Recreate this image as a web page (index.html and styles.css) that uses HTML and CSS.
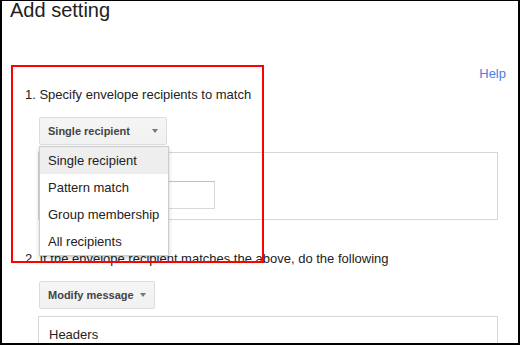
FILE: index.html
```html
<!DOCTYPE html>
<html lang="en">
<head>
    <meta charset="UTF-8">
    <title>Add setting</title>
    <link rel="stylesheet" href="styles.css">
</head>
<body>

    <div class="page">
        <h1 class="title">Add setting</h1>

        <div class="help-row">
            <a href="#" class="help-link">Help</a>
        </div>

        <div class="step">
            <div class="step-label">1. Specify envelope recipients to match</div>
            <div class="step-body">
                <div class="select">
                    <div class="btn btn-wide">
                        <span>Single recipient</span>
                        <span class="arrow"></span>
                    </div>
                    <ul class="menu">
                        <li class="menu-item active">Single recipient</li>
                        <li class="menu-item">Pattern match</li>
                        <li class="menu-item">Group membership</li>
                        <li class="menu-item">All recipients</li>
                    </ul>
                </div>
                <div class="panel panel-match">
                    <div class="text-input"></div>
                </div>
            </div>
        </div>

        <div class="step step-second">
            <div class="step-label">2. If the envelope recipient matches the above, do the following</div>
            <div class="step-body">
                <div class="btn">
                    <span>Modify message</span>
                    <span class="arrow"></span>
                </div>
                <div class="panel panel-headers">Headers</div>
            </div>
        </div>

        <div class="highlight"></div>
    </div>

</body>
</html>
```

FILE: styles.css
```css
body {
    margin: 0;
    padding: 0;
    font-family: "Liberation Sans", Arial, sans-serif;
    font-size: 13px;
    color: #222;
    background: #fff;
}

.page {
    position: relative;
    height: 345px;
    box-sizing: border-box;
    border: 2px solid #000;
    border-top-width: 1px;
    overflow: hidden;
    background: #fff;
}

.title {
    margin: 0;
    padding-left: 8px;
    font-size: 20px;
    font-weight: normal;
    line-height: 18px;
    color: #222;
}

.help-row {
    margin-top: 47px;
    padding-right: 12px;
    text-align: right;
    line-height: 16px;
}

.help-link {
    color: #4a7de2;
    text-decoration: none;
}

.step {
    margin-top: 5px;
    padding: 0 20px 0 23px;
    line-height: 16px;
}

.step-second {
    margin-top: 31px;
}

.step-body {
    padding-left: 13px;
}

.select {
    position: relative;
    width: 128px;
    margin-top: 14px;
    margin-left: 1px;
}

.btn {
    display: inline-flex;
    align-items: center;
    gap: 6px;
    height: 28px;
    box-sizing: border-box;
    padding: 0 8px;
    border: 1px solid #dcdcdc;
    border-radius: 2px;
    background: linear-gradient(#f5f5f5, #f1f1f1);
    color: #444;
    font-size: 11px;
    font-weight: bold;
}

.step-second .btn {
    margin-top: 14px;
    margin-left: 1px;
}

.btn-wide {
    width: 128px;
    justify-content: space-between;
}

.arrow {
    width: 0;
    height: 0;
    border-left: 3px solid transparent;
    border-right: 3px solid transparent;
    border-top: 4px solid #777;
}

.menu {
    position: absolute;
    top: 29px;
    left: 0;
    width: 130px;
    box-sizing: border-box;
    margin: 0;
    padding: 0;
    list-style: none;
    background: #fff;
    border: 1px solid rgba(0, 0, 0, .2);
    box-shadow: 0 2px 4px rgba(0, 0, 0, .2);
    z-index: 2;
}

.menu-item {
    height: 27px;
    line-height: 27px;
    padding-left: 8px;
    color: #222;
}

.menu-item.active {
    background: #eee;
}

.panel {
    margin-top: 7px;
    border: 1px solid #d6d6d6;
}

.panel-match {
    height: 68px;
    box-sizing: border-box;
    padding: 28px 0 0 10px;
}

.text-input {
    width: 166px;
    height: 28px;
    box-sizing: border-box;
    border: 1px solid #d9d9d9;
    border-top-color: #c0c0c0;
}

.panel-headers {
    height: 60px;
    padding: 10px 0 0 10px;
    line-height: 16px;
}

.highlight {
    position: absolute;
    left: 9px;
    top: 64px;
    width: 253px;
    height: 198px;
    box-sizing: border-box;
    border: 2px solid #f00;
    z-index: 3;
}
```
